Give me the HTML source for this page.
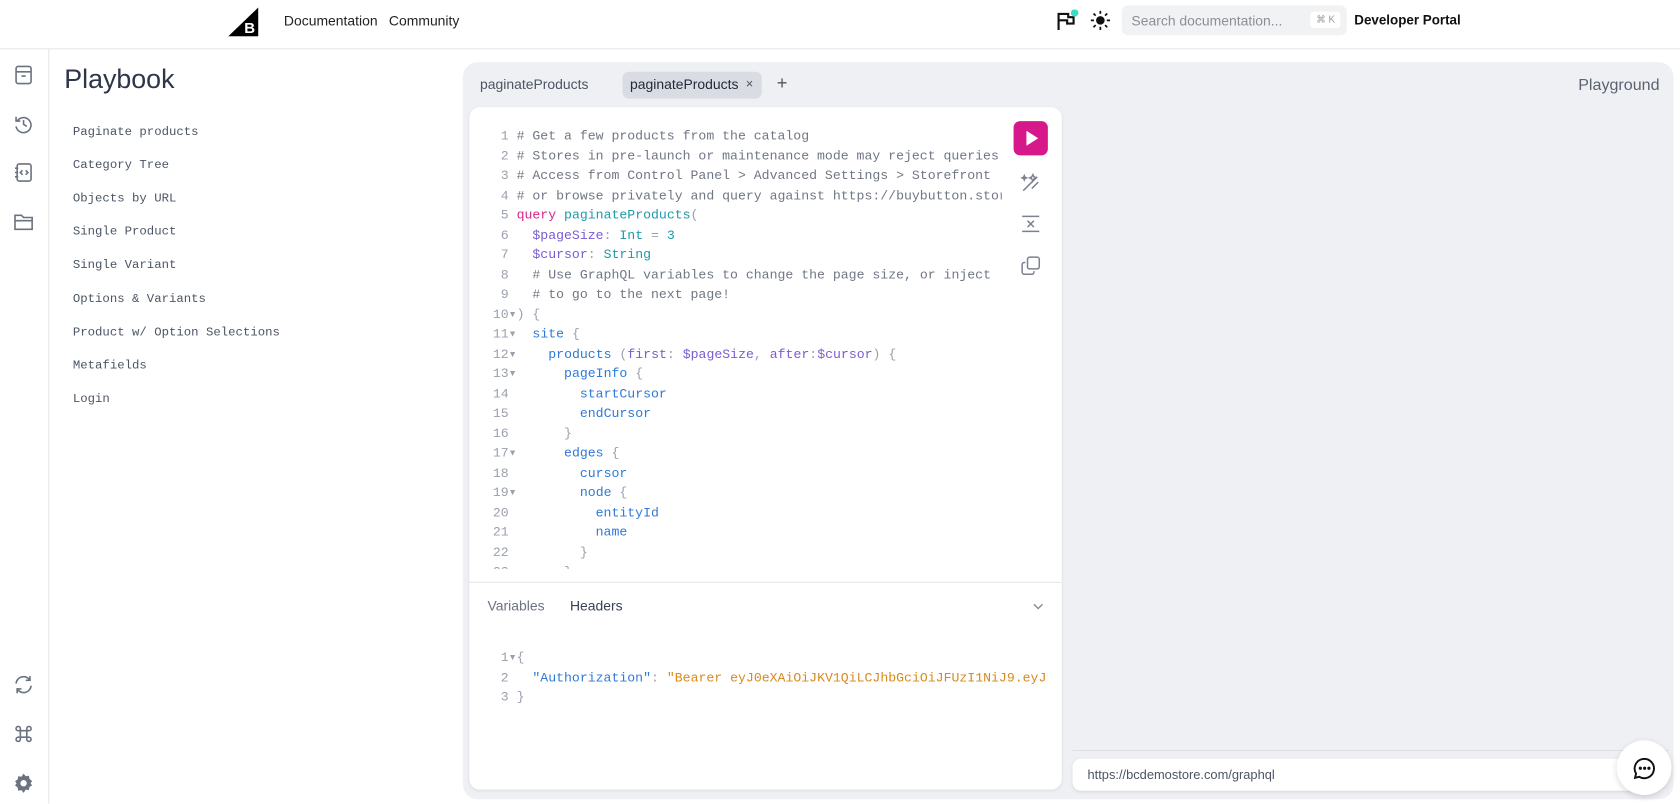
<!DOCTYPE html>
<html><head><meta charset="utf-8"><style>
*{box-sizing:border-box;margin:0;padding:0}
html,body{width:1680px;height:804px;overflow:hidden;background:#fff}
body{font-family:"Liberation Sans",sans-serif;color:#1f2937}
#w{position:absolute;left:0;top:0;width:1568px;height:750px;transform:scale(1.07143);transform-origin:0 0}
.top{position:absolute;left:0;top:0;width:1568px;height:46px;border-bottom:1px solid #e5e7eb;background:#fff}
.side{position:absolute;left:0;top:46px;width:46px;height:704px;border-right:1px solid #e5e7eb}
.ico{position:absolute;left:11px;width:22px;height:22px}
.pb{position:absolute;left:60px;top:60px;font-size:25px;color:#2d3648;font-weight:500}
.nav{position:absolute;left:68px;font-size:11.5px;color:#4b5563;font-family:"Liberation Mono",monospace}
.panel{position:absolute;left:432px;top:58px;width:1130px;height:688px;background:#eff0f4;border-radius:14px}
.card{position:absolute;left:438px;top:100px;width:553px;height:637px;background:#fff;border-radius:10px;box-shadow:0 1px 3px rgba(0,0,0,.08)}
.code{position:absolute;font-family:"Liberation Mono",monospace;font-size:12.3px;line-height:18.5px;white-space:pre;color:#666d7a}
.ln{color:#9aa1ad}
.c{color:#707784}.k{color:#d6278a}.f{color:#1e9aa8}.v{color:#7b5cd0}.t{color:#1e9aa8}.fd{color:#2e7ad8}.s{color:#d78a1c}.p{color:#9aa1ad}
</style></head><body><div id="w">
<div class="top">
 <svg style="position:absolute;left:213px;top:7px" width="30" height="27" viewBox="0 0 30 27"><polygon points="28,0 28,27 0,27" fill="#000"/><text x="15" y="24" font-size="14" font-weight="bold" fill="#fff" font-family="Liberation Sans">B</text></svg>
 <span style="position:absolute;left:265px;top:12px;font-size:13px;color:#222">Documentation</span>
 <span style="position:absolute;left:363px;top:12px;font-size:13px;color:#222">Community</span>
 <svg style="position:absolute;left:985px;top:9px" width="22" height="22" viewBox="0 0 22 22"><path d="M3 19V4h9v3h5v6h-6v-3H3" fill="none" stroke="#111" stroke-width="2"/><circle cx="18" cy="3" r="3.5" fill="#3fd9c7"/></svg>
 <svg style="position:absolute;left:1018px;top:10px" width="18" height="18" viewBox="0 0 18 18"><circle cx="9" cy="9" r="4" fill="#111"/><g stroke="#111" stroke-width="1.6"><path d="M9 0v3M9 15v3M0 9h3M15 9h3M2.6 2.6l2 2M13.4 13.4l2 2M2.6 15.4l2-2M13.4 4.6l2-2"/></g></svg>
 <div style="position:absolute;left:1047px;top:5px;width:210px;height:28px;background:#f1f2f4;border-radius:6px"><span style="position:absolute;left:9px;top:7px;font-size:13px;color:#8a8f98">Search documentation...</span><span style="position:absolute;right:6px;top:6px;background:#fff;border-radius:3px;font-size:9px;color:#999;padding:2px 5px">⌘ K</span></div>
 <span style="position:absolute;left:1264px;top:12px;font-size:12.5px;font-weight:bold;color:#111">Developer Portal</span>
</div>
<div class="side">
 <svg class="ico" style="top:13px" viewBox="0 0 22 22" fill="none" stroke="#6b7280" stroke-width="1.5"><rect x="4" y="3" width="14" height="16" rx="2"/><path d="M4 8h14M9 12h4"/></svg>
 <svg class="ico" style="top:59px" viewBox="0 0 22 22" fill="none" stroke="#6b7280" stroke-width="1.5"><path d="M5 8a7 7 0 1 1 -1 5M4 4v4h4M11 7v4l3 2"/></svg>
 <svg class="ico" style="top:104px" viewBox="0 0 22 22" fill="none" stroke="#6b7280" stroke-width="1.5"><rect x="5" y="3" width="13" height="16" rx="2"/><path d="M3 7h3M3 11h3M3 15h3M10 9l-2 2 2 2M13 9l2 2-2 2"/></svg>
 <svg class="ico" style="top:150px" viewBox="0 0 22 22" fill="none" stroke="#6b7280" stroke-width="1.5"><path d="M3 5h6l2 2h8v11H3zM3 10h16"/></svg>
 <svg class="ico" style="top:582px" viewBox="0 0 22 22" fill="none" stroke="#6b7280" stroke-width="1.5"><path d="M4 10a7 7 0 0 1 13-3M18 12a7 7 0 0 1-13 3M17 3v4h-4M5 19v-4h4"/></svg>
 <svg class="ico" style="top:628px" viewBox="0 0 22 22" fill="none" stroke="#6b7280" stroke-width="1.5"><path d="M8 8h6v6H8zM8 8H6a2 2 0 1 1 2-2zM14 8V6a2 2 0 1 1 2 2zM14 14h2a2 2 0 1 1-2 2zM8 14v2a2 2 0 1 1-2-2z"/></svg>
 <svg class="ico" style="top:674px" viewBox="0 0 22 22"><path d="M11 2l2 2.5 3-.5.5 3L19 9l-1.5 2 1.5 2-2.5 1.5-.5 3-3-.5L11 20l-2-2.5-3 .5-.5-3L3 13l1.5-2L3 9l2.5-1.5.5-3 3 .5z" fill="#6b7280"/><circle cx="11" cy="11" r="3" fill="#fff"/></svg>
</div>
<div class="pb">Playbook</div>
<div class="nav" style="top:117px">Paginate products</div>
<div class="nav" style="top:148px">Category Tree</div>
<div class="nav" style="top:179px">Objects by URL</div>
<div class="nav" style="top:210px">Single Product</div>
<div class="nav" style="top:241px">Single Variant</div>
<div class="nav" style="top:273px">Options &amp; Variants</div>
<div class="nav" style="top:304px">Product w/ Option Selections</div>
<div class="nav" style="top:335px">Metafields</div>
<div class="nav" style="top:366px">Login</div>

<div class="panel"></div>
<span style="position:absolute;left:448px;top:71px;font-size:13px;color:#4b5563">paginateProducts</span>
<div style="position:absolute;left:581px;top:67px;width:130px;height:25px;background:#d9dce3;border-radius:6px"><span style="position:absolute;left:7px;top:4px;font-size:13px;color:#1f2937">paginateProducts</span><span style="position:absolute;left:115px;top:4px;font-size:12px;color:#555">×</span></div>
<span style="position:absolute;left:725px;top:68px;font-size:17px;color:#555">+</span>
<span style="position:absolute;left:1473px;top:71px;font-size:15px;color:#5b6270;font-weight:500">Playground</span>

<div class="card"></div>
<div class="code" style="left:460px;top:118px;width:475px;height:413px;overflow:hidden"><span class="ln"> 1 </span><span class="c"># Get a few products from the catalog</span>
<span class="ln"> 2 </span><span class="c"># Stores in pre-launch or maintenance mode may reject queries</span>
<span class="ln"> 3 </span><span class="c"># Access from Control Panel &gt; Advanced Settings &gt; Storefront</span>
<span class="ln"> 4 </span><span class="c"># or browse privately and query against https://buybutton.store</span>
<span class="ln"> 5 </span><span class="k">query</span> <span class="f">paginateProducts</span><span class="p">(</span>
<span class="ln"> 6 </span>  <span class="v">$pageSize</span><span class="p">:</span> <span class="t">Int</span> <span class="p">=</span> <span class="t">3</span>
<span class="ln"> 7 </span>  <span class="v">$cursor</span><span class="p">:</span> <span class="t">String</span>
<span class="ln"> 8 </span>  <span class="c"># Use GraphQL variables to change the page size, or inject</span>
<span class="ln"> 9 </span>  <span class="c"># to go to the next page!</span>
<span class="ln">10▾</span><span class="p">) {</span>
<span class="ln">11▾</span>  <span class="fd">site</span> <span class="p">{</span>
<span class="ln">12▾</span>    <span class="fd">products</span> <span class="p">(</span><span class="v">first</span><span class="p">:</span> <span class="v">$pageSize</span><span class="p">,</span> <span class="v">after</span><span class="p">:</span><span class="v">$cursor</span><span class="p">) {</span>
<span class="ln">13▾</span>      <span class="fd">pageInfo</span> <span class="p">{</span>
<span class="ln">14 </span>        <span class="fd">startCursor</span>
<span class="ln">15 </span>        <span class="fd">endCursor</span>
<span class="ln">16 </span>      <span class="p">}</span>
<span class="ln">17▾</span>      <span class="fd">edges</span> <span class="p">{</span>
<span class="ln">18 </span>        <span class="fd">cursor</span>
<span class="ln">19▾</span>        <span class="fd">node</span> <span class="p">{</span>
<span class="ln">20 </span>          <span class="fd">entityId</span>
<span class="ln">21 </span>          <span class="fd">name</span>
<span class="ln">22 </span>        <span class="p">}</span>
<span class="ln">23 </span>      <span class="p">}</span></div>
<div style="position:absolute;left:946px;top:113px;width:32px;height:32px;background:#d6188a;border-radius:6px"><svg width="32" height="32" viewBox="0 0 32 32"><polygon points="12,9 23,16 12,23" fill="#fff"/></svg></div>
<svg style="position:absolute;left:951px;top:159px" width="22" height="22" viewBox="0 0 22 22" fill="none" stroke="#7b8190" stroke-width="1.4"><path d="M4 19L17 6M13 4l1 2 2 1-2 1-1 2-1-2-2-1 2-1zM5 5l.6 1.4L7 7l-1.4.6L5 9l-.6-1.4L3 7l1.4-.6zM12 17l6-6"/></svg>
<svg style="position:absolute;left:951px;top:198px" width="22" height="22" viewBox="0 0 22 22" fill="none" stroke="#7b8190" stroke-width="1.4"><path d="M3 4h16M3 18h16M8 8l6 6M14 8l-6 6"/></svg>
<svg style="position:absolute;left:951px;top:237px" width="22" height="22" viewBox="0 0 22 22" fill="none" stroke="#7b8190" stroke-width="1.4"><rect x="8" y="3" width="11" height="11" rx="2"/><path d="M6 8H5a2 2 0 0 0-2 2v7a2 2 0 0 0 2 2h7a2 2 0 0 0 2-2v-1"/></svg>
<div style="position:absolute;left:438px;top:543px;width:553px;height:1px;background:#e5e7eb"></div>
<span style="position:absolute;left:455px;top:558px;font-size:13px;color:#6b7280">Variables</span>
<span style="position:absolute;left:532px;top:558px;font-size:13px;color:#374151">Headers</span>
<svg style="position:absolute;left:963px;top:561px" width="12" height="10" viewBox="0 0 12 10"><path d="M2 3l4 4 4-4" fill="none" stroke="#888" stroke-width="1.3"/></svg>
<div class="code" style="left:460px;top:605px;width:519px;overflow:hidden"><span class="ln"> 1▾</span><span class="p">{</span>
<span class="ln"> 2 </span>  <span class="fd">"Authorization"</span><span class="p">:</span> <span class="s">"Bearer eyJ0eXAiOiJKV1QiLCJhbGciOiJFUzI1NiJ9.eyJ</span>
<span class="ln"> 3 </span><span class="p">}</span></div>
<div style="position:absolute;left:1001px;top:700px;width:556px;height:1px;background:#dcdfe5"></div>
<div style="position:absolute;left:1001px;top:708px;width:545px;height:30px;background:#fff;border-radius:8px;box-shadow:0 1px 3px rgba(0,0,0,.1)"><span style="position:absolute;left:14px;top:8px;font-size:12px;color:#4b5563">https://bcdemostore.com/graphql</span></div>
<div style="position:absolute;left:1509px;top:691px;width:51px;height:51px;border-radius:50%;background:#fff;box-shadow:0 2px 6px rgba(0,0,0,.15)"><svg style="position:absolute;left:14px;top:14px" width="24" height="24" viewBox="0 0 24 24" fill="none" stroke="#111" stroke-width="1.8"><path d="M3 21l1-4a9 9 0 1 1 3 3z"/><circle cx="8" cy="12" r=".6" fill="#111"/><circle cx="12" cy="12" r=".6" fill="#111"/><circle cx="16" cy="12" r=".6" fill="#111"/></svg></div>
</div></body></html>
